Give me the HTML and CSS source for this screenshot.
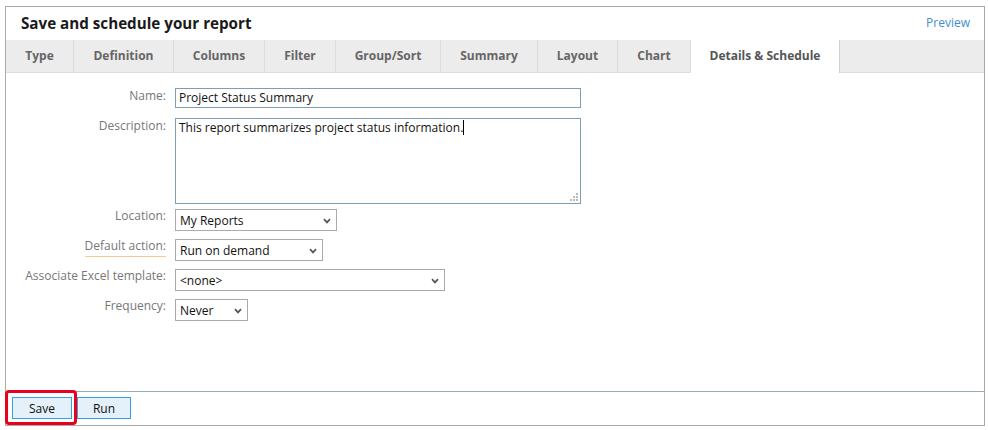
FILE: index.html
```html
<!DOCTYPE html>
<html>
<head>
<meta charset="utf-8">
<link rel="stylesheet" href="styles.css">
</head>
<body>
<div class="panel">
  <div class="header">
    <h1 class="title">Save and schedule your report</h1>
    <a class="preview" href="#">Preview</a>
  </div>
  <div class="tabs">
    <div class="tab t-type">Type</div>
    <div class="tab t-def">Definition</div>
    <div class="tab t-col">Columns</div>
    <div class="tab t-fil">Filter</div>
    <div class="tab t-grp">Group/Sort</div>
    <div class="tab t-sum">Summary</div>
    <div class="tab t-lay">Layout</div>
    <div class="tab t-cha">Chart</div>
    <div class="tab t-det active">Details &amp; Schedule</div>
    <div class="tab-fill"></div>
  </div>
  <div class="form">
    <div class="row r-name">
      <div class="label">Name:</div>
      <div class="input name-input">Project Status Summary</div>
    </div>
    <div class="row r-desc">
      <div class="label">Description:</div>
      <div class="input textarea">This report summarizes project status information.<span class="caret"></span>
        <svg class="grip" width="8" height="8" viewBox="0 0 8 8"><rect x="6" y="0" width="2" height="2" fill="#bbb"/><rect x="3" y="3" width="2" height="2" fill="#bbb"/><rect x="6" y="3" width="2" height="2" fill="#bbb"/><rect x="0" y="6" width="2" height="2" fill="#bbb"/><rect x="3" y="6" width="2" height="2" fill="#bbb"/><rect x="6" y="6" width="2" height="2" fill="#bbb"/></svg>
      </div>
    </div>
    <div class="row r-loc">
      <div class="label">Location:</div>
      <div class="select sel-loc"><span>My Reports</span><svg class="chev" width="8" height="6" viewBox="0 0 8 6"><path d="M1 1.2 L4 4.4 L7 1.2" fill="none" stroke="#555" stroke-width="1.7"/></svg></div>
    </div>
    <div class="row r-sel">
      <div class="label"><span class="dotted">Default action:</span></div>
      <div class="select sel-act"><span>Run on demand</span><svg class="chev" width="8" height="6" viewBox="0 0 8 6"><path d="M1 1.2 L4 4.4 L7 1.2" fill="none" stroke="#555" stroke-width="1.7"/></svg></div>
    </div>
    <div class="row r-sel">
      <div class="label">Associate Excel template:</div>
      <div class="select sel-xls"><span>&lt;none&gt;</span><svg class="chev" width="8" height="6" viewBox="0 0 8 6"><path d="M1 1.2 L4 4.4 L7 1.2" fill="none" stroke="#555" stroke-width="1.7"/></svg></div>
    </div>
    <div class="row r-sel">
      <div class="label">Frequency:</div>
      <div class="select sel-frq"><span>Never</span><svg class="chev" width="8" height="6" viewBox="0 0 8 6"><path d="M1 1.2 L4 4.4 L7 1.2" fill="none" stroke="#555" stroke-width="1.7"/></svg></div>
    </div>
  </div>
  <div class="footer">
    <button class="btn">Save</button>
    <button class="btn">Run</button>
    <div class="highlight"></div>
  </div>
</div>
</body>
</html>
```
FILE: styles.css
```css
* { box-sizing: border-box; }
body {
  margin: 0;
  background: #fff;
  font-family: "Open Sans", "Noto Sans", sans-serif;
  font-size: 12px;
  color: #111;
}
.panel {
  margin: 6px 0 0 5px;
  width: 980px;
  height: 420px;
  border: 1px solid #aaa;
  display: flex;
  flex-direction: column;
}
.header {
  height: 33px;
  display: flex;
  align-items: center;
  justify-content: space-between;
  padding: 0 14px 2px 15px;
}
.title {
  margin: 0;
  font-size: 15.2px;
  font-weight: 700;
  color: #1a1a1a;
}
.preview {
  color: #3d8fd1;
  text-decoration: none;
  font-size: 12px;
}
.tabs {
  height: 33px;
  display: flex;
  background: #ececec;
  border-bottom: 1px solid #dedede;
}
.tab {
  display: flex;
  align-items: center;
  justify-content: center;
  font-weight: 700;
  color: #666;
  font-size: 12px;
  border-right: 1px solid #dcdcdc;
  height: 32px;
  padding-bottom: 2px;
}
.t-type { width: 68px; }
.t-def { width: 100px; }
.t-col { width: 91px; }
.t-fil { width: 71px; }
.t-grp { width: 105px; }
.t-sum { width: 97px; }
.t-lay { width: 80px; }
.t-cha { width: 73px; }
.t-det {
  width: 149px;
  background: #fff;
  color: #555;
  height: 33px;
  border-right: 1px solid #d0d0d0;
}
.tab-fill { flex: 1; }
.form {
  flex: 1;
  display: flex;
  flex-direction: column;
  padding-top: 15px;
}
.row {
  display: flex;
  align-items: flex-start;
  gap: 9px;
}
.r-desc { margin-top: 10px; }
.r-loc { margin-top: 5px; }
.r-sel { margin-top: 8px; }
.label {
  width: 160px;
  flex: none;
  text-align: right;
  color: #777;
  margin-top: -1px;
}
.r-loc .label, .r-sel .label { margin-top: -2px; }
.dotted {
  border-bottom: 1px solid #f6c998;
  padding-bottom: 2px;
}
.input {
  border: 1px solid #7f9db5;
  background: #fff;
  padding: 0 3px;
  color: #111;
}
.name-input {
  width: 406px;
  height: 20px;
  line-height: 18px;
}
.textarea {
  position: relative;
  width: 406px;
  height: 86px;
  line-height: 17px;
  padding-top: 0;
}
.caret {
  display: inline-block;
  width: 1px;
  height: 15px;
  background: #000;
  vertical-align: -3px;
}
.grip {
  position: absolute;
  right: 2px;
  bottom: 2px;
}
.select {
  height: 22px;
  border: 1px solid #aaa;
  display: flex;
  align-items: center;
  justify-content: space-between;
  padding: 0 5px 0 4px;
  color: #111;
  background: #fff;
}
.chev { margin-top: 1px; }
.sel-loc { width: 162px; }
.sel-act { width: 148px; }
.sel-xls { width: 270px; }
.sel-frq { width: 73px; }
.footer {
  position: relative;
  height: 34px;
  border-top: 1px solid #9aabb8;
  display: flex;
  align-items: flex-start;
  gap: 5px;
  padding: 5px 0 0 6px;
}
.btn {
  font-family: inherit;
  font-size: 12px;
  color: #111;
  background: #e4f0fa;
  border: 1px solid #3a9fd6;
  height: 22px;
  padding: 0;
  margin: 0;
}
.btn:first-child { width: 60px; }
.btn:nth-child(2) { width: 54px; }
.highlight {
  position: absolute;
  left: -1px;
  top: -2px;
  width: 72px;
  height: 35px;
  border: 3px solid #e8001c;
  border-radius: 4px;
}
```
